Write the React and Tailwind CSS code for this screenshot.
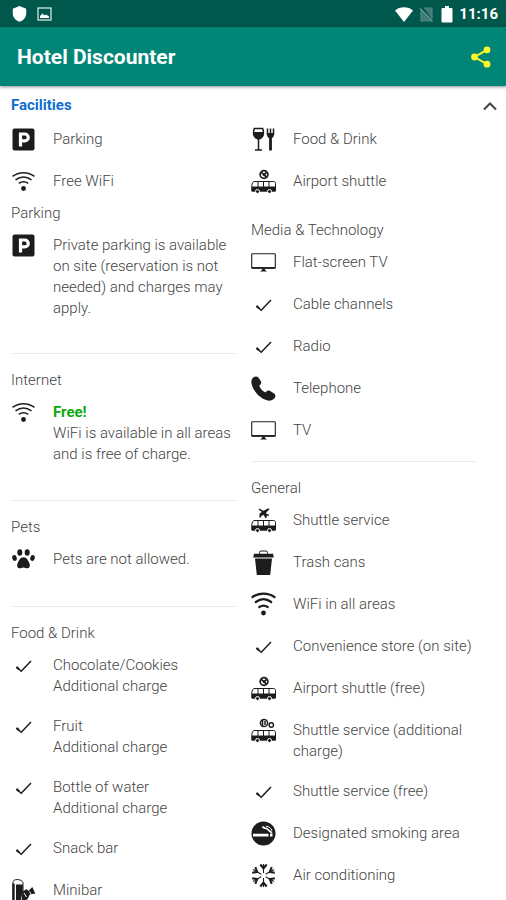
import { useState } from "react";

const TOP_LEFT = [
  { icon: "parking", text: "Parking" },
  { icon: "wifi", text: "Free WiFi" },
];

const TOP_RIGHT = [
  { icon: "food", text: "Food & Drink" },
  { icon: "shuttleFree", text: "Airport shuttle" },
];

const PARKING = [
  {
    icon: "parking",
    text: "Private parking is available on site (reservation is not needed) and charges may apply.",
  },
];

const INTERNET = [
  {
    icon: "wifi",
    badge: "Free!",
    text: "WiFi is available in all areas and is free of charge.",
  },
];

const PETS = [{ icon: "paw", text: "Pets are not allowed." }];

const FOOD = [
  { icon: "check", text: "Chocolate/Cookies", note: "Additional charge" },
  { icon: "check", text: "Fruit", note: "Additional charge" },
  { icon: "check", text: "Bottle of water", note: "Additional charge" },
  { icon: "check", text: "Snack bar" },
  { icon: "minibar", text: "Minibar" },
];

const MEDIA = [
  { icon: "tv", text: "Flat-screen TV" },
  { icon: "check", text: "Cable channels" },
  { icon: "check", text: "Radio" },
  { icon: "phone", text: "Telephone" },
  { icon: "tv", text: "TV" },
];

const GENERAL = [
  { icon: "shuttlePlane", text: "Shuttle service" },
  { icon: "trash", text: "Trash cans" },
  { icon: "wifiBold", text: "WiFi in all areas" },
  { icon: "check", text: "Convenience store (on site)" },
  { icon: "shuttleFree", text: "Airport shuttle (free)" },
  { icon: "shuttlePaid", text: "Shuttle service (additional charge)" },
  { icon: "check", text: "Shuttle service (free)" },
  { icon: "smoking", text: "Designated smoking area" },
  { icon: "snow", text: "Air conditioning" },
];

const Bus = () => (
  <>
    <path
      d="M3 12.5h19.5c1.4 0 2 .7 2 2V22H.8v-5.500Q1 13 3 12.500z"
      fill="white"
      stroke="currentColor"
      strokeWidth="1"
    />
    <path d="M.8 17.500h23.700v5H.8z" />
    <path d="M7 13v5M12.500 13v5M18 13v5" stroke="currentColor" strokeWidth="1" />
    <circle cx="6.500" cy="22.500" r="2" stroke="white" strokeWidth="1" />
    <circle cx="18.500" cy="22.500" r="2" stroke="white" strokeWidth="1" />
  </>
);

const ICONS = {
  parking: (
    <>
      <rect x="1.500" y="1.500" width="22" height="22" rx="2" />
      <path
        d="M9.500 19.500V7h4.300a3.400 3.400 0 0 1 0 6.900H9.500"
        fill="none"
        stroke="white"
        strokeWidth="3.200"
      />
    </>
  ),
  wifi: (
    <>
      <g fill="none" stroke="currentColor" strokeWidth="1.500">
        <path d="M1.500 7.300C8 2.400 17 2.400 23.500 7.300" />
        <path d="M4.500 10.800c5-3.600 11-3.600 16 0" />
        <path d="M7.800 14.400c3-2.100 6.400-2.100 9.400 0" />
      </g>
      <circle cx="12.500" cy="19.500" r="2.400" />
    </>
  ),
  wifiBold: (
    <>
      <g fill="none" stroke="currentColor" strokeWidth="2.200" strokeLinecap="round">
        <path d="M1.500 5C8 .4 17 .4 23.500 5" />
        <path d="M4.800 10c5-3.700 10.400-3.700 15.400 0" />
        <path d="M8.300 15c2.700-1.900 5.700-1.900 8.400 0" />
      </g>
      <circle cx="12.500" cy="21" r="2.400" />
    </>
  ),
  food: (
    <>
      <path
        d="M3.300 1.500h8.400c1.600 5 .8 9.300-4.200 10.500C2.500 10.800 1.700 6.500 3.300 1.500z"
        fill="white"
        stroke="currentColor"
        strokeWidth="1.500"
      />
      <path d="M2.600 5h9.800c.2 4-1.500 6.600-4.900 7-3.400-.4-5.100-3-4.900-7z" />
      <path d="M7.500 11v12M4 23h7" stroke="currentColor" strokeWidth="1.500" />
      <path d="M16.500 1.500v6M19.500 1.500v6M22.500 1.500v6" stroke="currentColor" strokeWidth="1.500" />
      <path d="M15.800 6h7.400c0 3-.9 4.500-2.300 5v12.500h-2.800V11c-1.400-.5-2.300-2-2.300-5z" />
    </>
  ),
  shuttleFree: (
    <>
      <circle cx="13" cy="5.500" r="3.900" fill="none" stroke="currentColor" strokeWidth="1.700" />
      <path d="M10.300 3.300 15.500 8M15.500 3.500 12 6.500" stroke="currentColor" strokeWidth="1.700" />
      <Bus />
    </>
  ),
  shuttlePaid: (
    <>
      <circle cx="13" cy="5" r="3.600" fill="none" stroke="currentColor" strokeWidth="1.500" />
      <path d="M11.500 2v6.500M14 3v4" stroke="currentColor" strokeWidth="1.500" />
      <circle cx="20.300" cy="7" r="2.200" fill="none" stroke="currentColor" strokeWidth="1.400" />
      <Bus />
    </>
  ),
  shuttlePlane: (
    <>
      <path d="M8.200.600l4.200 2.200L17.500.3l1 .9-3.300 3.400.6 5-1.300.6-1.900-3.500-2.400 1.600-1 1.700-.8-.6.200-3.800 2.300-1.600L7.600 1.500z" />
      <path d="M15 6.500l2.800 1" stroke="currentColor" strokeWidth="1.500" />
      <Bus />
    </>
  ),
  paw: (
    <>
      <ellipse cx="8.800" cy="5.500" rx="2.500" ry="3.200" />
      <ellipse cx="16.200" cy="5.500" rx="2.500" ry="3.200" />
      <ellipse cx="3.500" cy="11" rx="2.200" ry="3" transform="rotate(-18 3.500 11)" />
      <ellipse cx="21.500" cy="11" rx="2.200" ry="3" transform="rotate(18 21.500 11)" />
      <path d="M12.500 10.300c3.200 0 4.400 3 5.700 5.400 1.200 2.300.8 5.300-1.600 5.500-1.500.1-2.400-.8-4.100-.8s-2.600.9-4.100.8c-2.400-.2-2.800-3.200-1.600-5.500 1.300-2.400 2.500-5.400 5.700-5.400z" />
    </>
  ),
  check: (
    <>
      <path d="M5.500 14l4.700 4.300L20 8" fill="none" stroke="currentColor" strokeWidth="1.500" />
      <path d="M5.500 14l2.500 2.300" stroke="currentColor" strokeWidth="2.200" />
    </>
  ),
  tv: (
    <>
      <rect x=".7" y="3.800" width="23.600" height="14.400" rx=".8" fill="none" stroke="currentColor" strokeWidth="1.100" />
      <path d="M.7 17.800h23.600" stroke="currentColor" strokeWidth="1.500" />
      <path d="M11 18.500h3v1.600l2 1.400H9l2-1.400z" />
    </>
  ),
  phone: (
    <path d="M2.200 1.600C4 .1 6.300.2 7.600 1.800l2 2.900c1.200 1.900.6 3.500-1.400 5.100 1.100 2.900 3.300 5.200 6.300 6.700 1.700-2 3.400-2.500 5.100-1.300l3.400 2.200c1.700 1.200 1.900 3.200.4 4.800-1.800 2.200-4.600 3-7.600 2.100C8.800 22.200 2.400 15.500.6 7.800 0 5.400.500 3.100 2.200 1.600z" />
  ),
  trash: (
    <>
      <path d="M8.500 4V2.500q0-1.500 1.500-1.500h5q1.500 0 1.500 1.500V4" fill="none" stroke="currentColor" strokeWidth="1" />
      <path d="M3 3.800h19l.8 3.700H2.200z" />
      <path d="M4 8.500h17L19.200 25H5.800z" />
    </>
  ),
  smoking: (
    <>
      <circle cx="12.500" cy="12.500" r="12" />
      <path d="M2 14.200h15.500M19 14.200h2.500" stroke="white" strokeWidth="2.800" />
      <path
        d="M11.500 5.500c1 1.800 2.500 1.600 4 2.100 1.800.6 2 1.900 3.300 2.700 1.200.7 1.700 1 2 2.200"
        fill="none"
        stroke="white"
        strokeWidth="1.600"
      />
      <path d="M15 5.200c3 .3 5.300 2 6 4.800" fill="none" stroke="white" strokeWidth="1" />
    </>
  ),
  snow: (
    <g fill="none" stroke="currentColor">
      <path d="M12.500 1v23M2 6.500l21 12M2 18.500l21-12" strokeWidth="1.100" />
      <path
        d="M9.300 1.500l3.200 3.800 3.200-3.800M9.300 23.500l3.200-3.800 3.200 3.800M1.200 9.700l5-.8L4.300 4.200M23.800 9.700l-5-.8 1.900-4.700M1.200 15.300l5 .8-1.900 4.700M23.800 15.300l-5 .8 1.900 4.700"
        strokeWidth="2.100"
      />
      <circle cx="12.500" cy="12.500" r="2.500" fill="white" stroke="none" />
    </g>
  ),
  minibar: (
    <>
      <path d="M2 4.500Q2 1.500 6.500 1.500T12 4.500V25H2z" fill="white" stroke="currentColor" strokeWidth="1" />
      <path d="M1.300 5.500h2.400V25H1.300z" />
      <path d="M5 6.500h6.800v7L9 25H5z" />
      <path d="M11.500 13.500l4.300-2.500 1.500 2 4-4 3 6.500-5.500 1-2.500 5-5.800 1.500z" />
      <path d="M13 15l2.500 4M18.500 13.500l1.500 2.500" stroke="white" strokeWidth="1" />
    </>
  ),
};

const Icon = ({ name }) => (
  <svg
    viewBox="0 0 25 25"
    fill="currentColor"
    aria-hidden="true"
    className="size-[25px] shrink-0 text-[#1c1c1c]"
  >
    {ICONS[name]}
  </svg>
);

function FacilityList({ items }) {
  return (
    <ul className="flex flex-col gap-[19px]">
      {items.map((item) => (
        <li key={item.text} className="flex min-h-[23px] items-start gap-[17px]">
          <span className="-mt-0.5 flex h-[23px] shrink-0">
            <Icon name={item.icon} />
          </span>
          <p>
            {item.badge && <strong className="block font-bold text-[#0aa80a]">{item.badge}</strong>}
            {item.text}
            {item.note && <span className="block">{item.note}</span>}
          </p>
        </li>
      ))}
    </ul>
  );
}

function Section({ title, items }) {
  return (
    <section>
      <h3 className="mb-[11px]">{title}</h3>
      <FacilityList items={items} />
    </section>
  );
}

const Divider = ({ className }) => <hr className={`mb-4 border-[#ececec] ${className}`} />;

function StatusBar() {
  return (
    <div className="flex h-[27px] shrink-0 items-center justify-between bg-[#00574b] pt-px pr-2 pl-3 text-white">
      <div className="flex items-center gap-2.5">
        <svg viewBox="0 0 15 16" className="h-4 w-[15px]" fill="currentColor" aria-hidden="true">
          <path d="M7.500 0l6.700 2.800v4.700c0 3.900-2.800 7-6.700 8.300C3.600 14.500.8 11.400.8 7.500V2.800z" />
        </svg>
        <svg viewBox="0 0 15 14" className="h-3.5 w-[15px]" fill="none" aria-hidden="true">
          <rect x="1" y="1" width="13" height="12" stroke="#d5e5e2" strokeWidth="1.300" />
          <path d="M3 11V9l2.500-2.500 2 2L9 7.500l3 2V11z" fill="white" />
        </svg>
      </div>
      <div className="flex items-center">
        <svg viewBox="0 0 18 15" className="h-[15px] w-[18px]" fill="currentColor" aria-hidden="true">
          <path d="M0 3.500c5-4.300 13-4.300 18 0L9 15z" />
        </svg>
        <svg viewBox="0 0 14 15" className="ml-1.5 h-[15px] w-3.5" fill="none" aria-hidden="true">
          <path d="M5 1h8v11M2 4v10h10" fill="#3f7d74" stroke="#4b877e" strokeWidth="1.200" />
          <path d="M1 1.500l12.500 13" stroke="#6fa099" strokeWidth="1.300" />
        </svg>
        <svg viewBox="0 0 12 17" className="ml-2 h-[17px] w-3" fill="currentColor" aria-hidden="true">
          <path d="M4 0h4v2h2.500q1 0 1 1v12.500q0 1-1 1h-9q-1 0-1-1V3q0-1 1-1H4z" />
        </svg>
        <span className="ml-1.5 text-[15px] leading-none font-bold">11:16</span>
      </div>
    </div>
  );
}

export default function App() {
  const [open, setOpen] = useState(true);

  return (
    <div className="flex h-screen flex-col overflow-hidden bg-white font-[Roboto,sans-serif] text-[15px] leading-[21px] font-light text-[#444]">
      <StatusBar />

      <header className="z-10 flex h-[59px] shrink-0 items-center justify-between bg-[#008577] pt-px pr-3.5 pl-[17px] shadow-[0_1px_3px_rgba(0,0,0,0.45)]">
        <h1 className="text-[21px] leading-7 font-bold text-white">Hotel Discounter</h1>
        <button type="button" aria-label="Share" className="text-[#fdf62a]">
          <svg viewBox="1 1 22 22" className="size-[22px]" fill="currentColor" aria-hidden="true">
            <circle cx="5.500" cy="12" r="3.400" />
            <circle cx="18" cy="4.800" r="3.400" />
            <circle cx="18" cy="19.200" r="3.400" />
            <path d="M18 4.800L5.500 12l12.500 7.200" fill="none" stroke="currentColor" strokeWidth="2" />
          </svg>
        </button>
      </header>

      <main className="min-h-0 flex-1 overflow-y-auto [scrollbar-width:none]">
        <h2>
          <button
            type="button"
            aria-expanded={open}
            onClick={() => setOpen(!open)}
            className="mt-[9px] flex w-full items-center justify-between pr-[9px] pl-[11px] font-bold text-[#0f6fd0]"
          >
            Facilities
            <svg
              viewBox="0 0 14 10"
              fill="none"
              aria-hidden="true"
              className={open ? "h-2.5 w-3.5 text-[#444]" : "h-2.5 w-3.5 rotate-180 text-[#444]"}
            >
              <path d="M1 8.500L7 2.500l6 6" stroke="currentColor" strokeWidth="2" />
            </svg>
          </button>
        </h2>

        {open && (
          <div className="mt-[13px] grid grid-cols-2 items-start gap-x-[14px] pr-[29px] pl-[11px]">
            <div>
              <FacilityList items={TOP_LEFT} />
              <div className="mt-[9px]">
                <Section title="Parking" items={PARKING} />
              </div>
              <Divider className="mt-[34px]" />
              <Section title="Internet" items={INTERNET} />
              <Divider className="mt-[35px]" />
              <Section title="Pets" items={PETS} />
              <Divider className="mt-[34px]" />
              <Section title="Food & Drink" items={FOOD} />
            </div>

            <div>
              <FacilityList items={TOP_RIGHT} />
              <div className="mt-[26px]">
                <Section title="Media & Technology" items={MEDIA} />
              </div>
              <Divider className="mt-[18px]" />
              <Section title="General" items={GENERAL} />
            </div>
          </div>
        )}
      </main>
    </div>
  );
}
